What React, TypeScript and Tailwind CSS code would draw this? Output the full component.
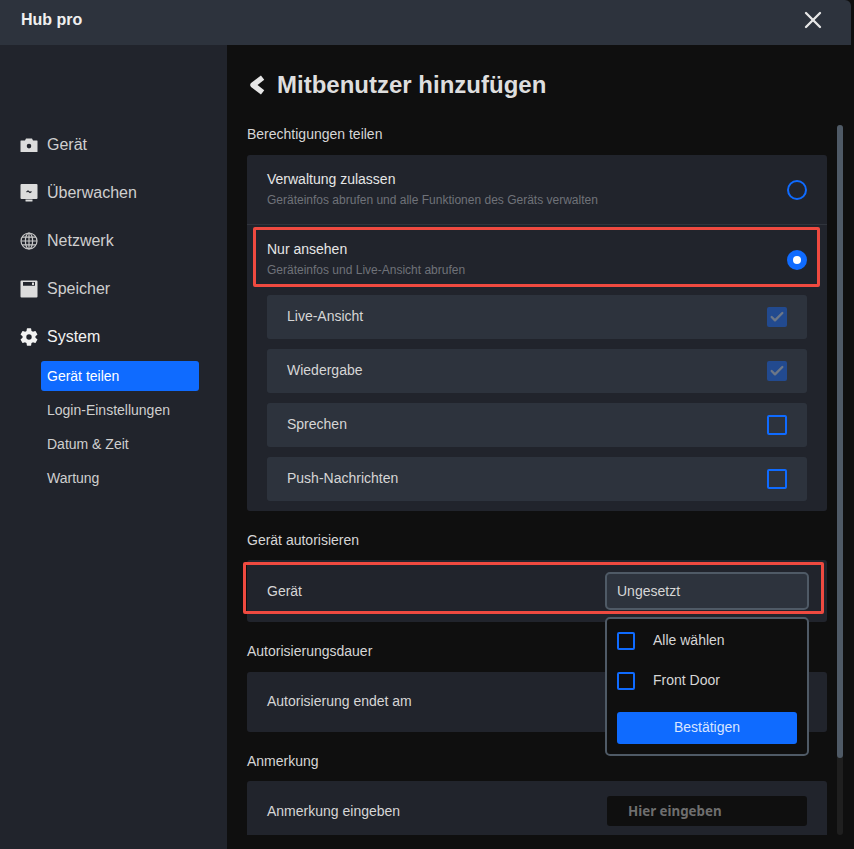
import { Check, X } from "lucide-react";

const font = "font-['Liberation_Sans',Arial,sans-serif]";

const CameraIcon = () => (
  <svg viewBox="0 0 18 18" className="h-[18px] w-[18px] text-[#dcdcdc]">
    <path
      fill="currentColor"
      fillRule="evenodd"
      d="M6 2.500h6L13 4.500H17a.5.5 0 0 1 .5.5V15.500a.5.5 0 0 1-.5.5H1a.5.5 0 0 1-.5-.5V5a.5.5 0 0 1 .5-.5H5ZM9 7.800a2.300 2.300 0 1 0 0 4.600a2.300 2.300 0 0 0 0-4.600Z"
    />
  </svg>
);

const MonitorIcon = () => (
  <svg viewBox="0 0 18 18" className="h-[18px] w-[18px] text-[#dcdcdc]">
    <path fill="currentColor" d="M1.500 0h15a1 1 0 0 1 1 1V14a1 1 0 0 1-1 1h-15a1 1 0 0 1-1-1V1a1 1 0 0 1 1-1ZM5.500 15.500h7V17a.5.5 0 0 1-.5.5H6a.5.5 0 0 1-.5-.5Z" />
    <path fill="none" stroke="#21242c" strokeWidth="1.100" d="M6.500 8l1.500-1 2 1.500 1.500-1" />
  </svg>
);

const GlobeIcon = () => (
  <svg viewBox="0 0 18 18" className="h-[18px] w-[18px] text-[#c8c8c8]" fill="none" stroke="currentColor" strokeWidth="1.200">
    <circle cx="9" cy="9" r="8" />
    <ellipse cx="9" cy="9" rx="3.600" ry="8" />
    <path d="M9 1v16M1 9h16M2 5.200h14M2 12.800h14" />
  </svg>
);

const SaveIcon = () => (
  <svg viewBox="0 0 18 18" className="h-[18px] w-[18px] text-[#dcdcdc]">
    <path
      fill="currentColor"
      fillRule="evenodd"
      d="M1.500 0.500h15a1 1 0 0 1 1 1v15a1 1 0 0 1-1 1h-15a1 1 0 0 1-1-1v-15a1 1 0 0 1 1-1ZM3 2v3.800h12V2ZM12 2.800h2v2h-2Z"
    />
    <rect x="12" y="2.800" width="2" height="2" fill="currentColor" />
  </svg>
);

const GearIcon = () => (
  <svg viewBox="2.500 2 19 20" className="h-[18px] w-[18px]">
    <path
      fill="currentColor"
      d="M19.140 12.940c.04-.3.060-.61.060-.94s-.020-.64-.070-.94l2.030-1.580a.5.5 0 0 0 .12-.61l-1.920-3.320a.49.49 0 0 0-.59-.22l-2.390.96a7 7 0 0 0-1.620-.94l-.36-2.540a.48.48 0 0 0-.48-.41h-3.840a.47.47 0 0 0-.47.41l-.36 2.540a7.200 7.200 0 0 0-1.620.94l-2.390-.96a.48.48 0 0 0-.59.22L2.740 8.870a.47.47 0 0 0 .12.61l2.030 1.580c-.05.3-.09.63-.09.94s.020.64.070.94l-2.030 1.580a.5.5 0 0 0-.12.61l1.920 3.320c.12.22.37.29.59.22l2.390-.96c.5.380 1.030.7 1.620.94l.36 2.540c.05.24.24.41.48.41h3.840c.24 0 .44-.17.47-.41l.36-2.540a7 7 0 0 0 1.620-.94l2.390.96c.22.080.47 0 .59-.22l1.920-3.320a.47.47 0 0 0-.12-.61ZM12 15a3 3 0 1 1 0-6a3 3 0 0 1 0 6Z"
    />
  </svg>
);

const BackIcon = () => (
  <svg viewBox="0 0 16 20" className="ml-[2px] mr-3 h-5 w-4 text-[#e6e6e6]" fill="none" stroke="currentColor" strokeWidth="5.400" strokeLinejoin="round">
    <path d="M13.600 2.600 4 10l9.600 7.400" />
  </svg>
);

const navItems = [
  { label: "Gerät", icon: <CameraIcon /> },
  { label: "Überwachen", icon: <MonitorIcon /> },
  { label: "Netzwerk", icon: <GlobeIcon /> },
  { label: "Speicher", icon: <SaveIcon /> },
];

const subItems = ["Login-Einstellungen", "Datum & Zeit", "Wartung"];

const permissions = [
  { label: "Live-Ansicht", checked: true },
  { label: "Wiedergabe", checked: true },
  { label: "Sprechen", checked: false },
  { label: "Push-Nachrichten", checked: false },
];

const SectionTitle = ({ children, className }: { children: string; className: string }) => (
  <h3 className={`text-sm leading-4 text-[#d6d6d6] ${className}`}>{children}</h3>
);

const CheckBox = ({ checked }: { checked: boolean }) =>
  checked ? (
    <div className="flex h-5 w-5 items-center justify-center rounded-[2px] bg-[#224a8f]">
      <Check className="h-4 w-4 text-[#6d7787]" strokeWidth={3.5} />
    </div>
  ) : (
    <div className="h-5 w-5 rounded-[2px] border-2 border-[#0f6bff]" />
  );

export default function App() {
  return (
    <div className={`${font} relative h-[849px] w-[854px] overflow-hidden bg-[#0f0f0f]`}>
      {/* Header */}
      <div className="flex h-[45px] w-[851px] items-center justify-between rounded-tr-md bg-[#2d333d] pb-[5px] pl-[21px] pr-6">
        <span className="text-base font-bold text-[#f0f0f0]">Hub pro</span>
        <X className="h-7 w-7 text-[#e6e6e6]" strokeWidth={2} />
      </div>

      <div className="flex h-[804px]">
        {/* Sidebar */}
        <aside className="h-full w-[227px] shrink-0 bg-[#21242c] pt-[76px]">
          {navItems.map((item) => (
            <div key={item.label} className="flex h-12 items-center gap-[9px] pl-5 text-base text-[#cfcfcf]">
              {item.icon}
              <span>{item.label}</span>
            </div>
          ))}
          <div className="flex h-12 items-center gap-[9px] pl-5 text-base text-[#f2f2f2]">
            <GearIcon />
            <span>System</span>
          </div>
          <div className="flex w-[199px] flex-col gap-1 pl-[41px] text-sm">
            <div className="flex h-[30px] items-center rounded-[3px] bg-[#0f6bff] pl-[6px] text-white">Gerät teilen</div>
            {subItems.map((item) => (
              <div key={item} className="flex h-[30px] items-center pl-[6px] text-[#cfcfcf]">
                {item}
              </div>
            ))}
          </div>
        </aside>

        {/* Main */}
        <main className="flex h-[790px] flex-1 overflow-hidden">
          <div className="w-[600px] shrink-0 pl-5">
            <div className="flex h-[80px] items-center">
              <BackIcon />
              <h1 className="text-2xl font-bold text-[#dedede]">Mitbenutzer hinzufügen</h1>
            </div>

            <SectionTitle className="mt-[1px]">Berechtigungen teilen</SectionTitle>
            <div className="mt-[13px] w-[580px] rounded-[3px] bg-[#21242c]">
              <div className="flex h-[70px] items-center justify-between border-b border-[#30343c] pl-5 pr-5">
                <div className="-mt-[1px]">
                  <div className="text-sm leading-4 text-[#e6e6e6]">Verwaltung zulassen</div>
                  <div className="mt-[6px] text-xs leading-[14px] text-[#6f7279]">Geräteinfos abrufen und alle Funktionen des Geräts verwalten</div>
                </div>
                <div className="h-5 w-5 rounded-full border-2 border-[#0f6bff]" />
              </div>
              <div className="flex h-[70px] items-center justify-between pl-5 pr-5">
                <div className="-mt-[2px]">
                  <div className="text-sm leading-4 text-[#e6e6e6]">Nur ansehen</div>
                  <div className="mt-[6px] text-xs leading-[14px] text-[#6f7279]">Geräteinfos und Live-Ansicht abrufen</div>
                </div>
                <div className="flex h-5 w-5 items-center justify-center rounded-full bg-[#0f6bff]">
                  <div className="h-2 w-2 rounded-full bg-white" />
                </div>
              </div>
              <div className="flex flex-col gap-[10px] px-5 pb-[10px]">
                {permissions.map((p) => (
                  <div key={p.label} className="flex h-[44px] items-center justify-between rounded-[3px] bg-[#2d333d] pl-5 pr-5 text-sm text-[#d6d6d6]">
                    <span className="pb-[2px]">{p.label}</span>
                    <CheckBox checked={p.checked} />
                  </div>
                ))}
              </div>
            </div>

            <SectionTitle className="mt-[21px]">Gerät autorisieren</SectionTitle>
            <div className="mt-[12px] flex h-[62px] w-[580px] items-center justify-between rounded-[3px] bg-[#21242c] pb-[1px] pl-5 pr-5 text-sm text-[#d6d6d6]">
              <span>Gerät</span>
              <div className="-mr-[2px] flex h-[38px] w-[204px] items-center rounded-[5px] border-2 border-[#4f5a66] bg-[#2d333d] pl-[10px] text-sm text-[#d6d6d6]">
                Ungesetzt
              </div>
            </div>

            <SectionTitle className="mt-[21px]">Autorisierungsdauer</SectionTitle>
            <div className="mt-[13px] flex h-[60px] w-[580px] items-center rounded-[3px] bg-[#21242c] pl-5 text-sm text-[#d6d6d6]">
              <span className="pb-[2px]">Autorisierung endet am</span>
            </div>

            <SectionTitle className="mt-[21px]">Anmerkung</SectionTitle>
            <div className="mt-[12px] flex h-[60px] w-[580px] items-center justify-between rounded-[3px] bg-[#21242c] pl-5 pr-5 text-sm text-[#d6d6d6]">
              <span>Anmerkung eingeben</span>
              <div className="flex h-[30px] w-[200px] items-center rounded-[3px] bg-[#0f0f0f] pl-[21px] pt-[2px] font-['Noto_Sans',sans-serif] text-[13.33px] font-bold text-[#6e6e6e]">
                Hier eingeben
              </div>
            </div>
          </div>

          {/* Scrollbar */}
          <div className="ml-[10px] mt-[80px] h-[710px] w-[6px] rounded-full bg-[#1f1f1f]">
            <div className="h-[633px] w-[6px] rounded-full bg-[#4f5a66]" />
          </div>
        </main>
      </div>

      {/* Red annotation boxes */}
      <div className="absolute left-[253px] top-[227px] h-[60px] w-[567px] rounded-[2px] border-[3px] border-[#ef4a40]" />
      <div className="absolute left-[243px] top-[562px] h-[52px] w-[581px] rounded-[2px] border-[3px] border-[#ef4a40]" />

      {/* Device dropdown */}
      <div className="absolute left-[605px] top-[617px] h-[139px] w-[204px] rounded-[5px] border-2 border-[#4f5a66] bg-[#0f0f0f] px-[10px] pt-[13px] text-sm text-[#d6d6d6]">
        <div className="flex h-[18px] items-center gap-[18px]">
          <div className="h-[18px] w-[18px] rounded-[2px] border-2 border-[#0f6bff]" />
          <span className="pb-[2px]">Alle wählen</span>
        </div>
        <div className="mt-[22px] flex h-[18px] items-center gap-[18px]">
          <div className="h-[18px] w-[18px] rounded-[2px] border-2 border-[#0f6bff]" />
          <span className="pb-[2px]">Front Door</span>
        </div>
        <div className="mt-[22px] flex h-[32px] items-center justify-center rounded-[3px] bg-[#0f6bff] pb-[2px] text-[#d8e4ff]">Bestätigen</div>
      </div>
    </div>
  );
}
